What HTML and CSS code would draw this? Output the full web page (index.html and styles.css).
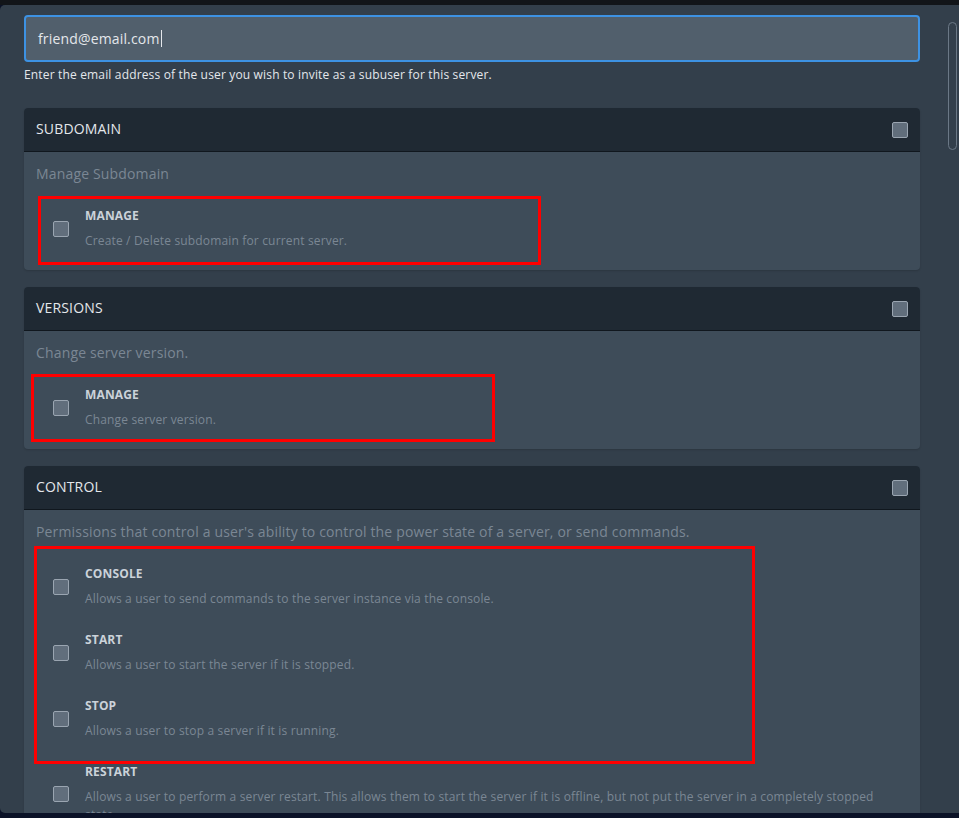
FILE: index.html
```html
<!DOCTYPE html>
<html>
<head>
<meta charset="utf-8">
<link rel="stylesheet" href="styles.css">
</head>
<body>
<div class="topbar"></div>
<div class="modal">
  <div class="scrollbar"></div>
  <div class="content">
    <div class="field">
      <div class="input"><span class="value">friend@email.com</span><span class="caret"></span></div>
      <p class="help">Enter the email address of the user you wish to invite as a subuser for this server.</p>
    </div>

    <section class="card">
      <header class="card-head"><h3>SUBDOMAIN</h3><span class="box"></span></header>
      <div class="card-body">
        <p class="card-desc">Manage Subdomain</p>
        <div class="row">
          <span class="box"></span>
          <div class="row-text"><div class="row-title">MANAGE</div><div class="row-desc">Create / Delete subdomain for current server.</div></div>
        </div>
      </div>
    </section>

    <section class="card">
      <header class="card-head"><h3>VERSIONS</h3><span class="box"></span></header>
      <div class="card-body">
        <p class="card-desc">Change server version.</p>
        <div class="row">
          <span class="box"></span>
          <div class="row-text"><div class="row-title">MANAGE</div><div class="row-desc">Change server version.</div></div>
        </div>
      </div>
    </section>

    <section class="card">
      <header class="card-head"><h3>CONTROL</h3><span class="box"></span></header>
      <div class="card-body">
        <p class="card-desc">Permissions that control a user's ability to control the power state of a server, or send commands.</p>
        <div class="row">
          <span class="box"></span>
          <div class="row-text"><div class="row-title">CONSOLE</div><div class="row-desc">Allows a user to send commands to the server instance via the console.</div></div>
        </div>
        <div class="row">
          <span class="box"></span>
          <div class="row-text"><div class="row-title">START</div><div class="row-desc">Allows a user to start the server if it is stopped.</div></div>
        </div>
        <div class="row">
          <span class="box"></span>
          <div class="row-text"><div class="row-title">STOP</div><div class="row-desc">Allows a user to stop a server if it is running.</div></div>
        </div>
        <div class="row">
          <span class="box"></span>
          <div class="row-text"><div class="row-title">RESTART</div><div class="row-desc">Allows a user to perform a server restart. This allows them to start the server if it is offline, but not put the server in a completely stopped state.</div></div>
        </div>
      </div>
    </section>
  </div>
  <div class="mark mark-1"></div>
  <div class="mark mark-2"></div>
  <div class="mark mark-3"></div>
</div>
</body>
</html>
```

FILE: styles.css
```css
* { box-sizing: border-box; }
html, body { margin: 0; padding: 0; }
body {
  background: #0b1227;
  font-family: "Open Sans", "Noto Sans", sans-serif;
  letter-spacing: 0.01em;
  color: #e4e7eb;
  height: 818px;
  overflow: hidden;
}
.topbar { height: 5px; background: #121519; }
.modal {
  position: relative;
  height: 808px;
  background: #333f4b;
  border-radius: 5px 0 0 5px;
  overflow: hidden;
}
.content { padding: 10px 39px 0 24px; }
.scrollbar {
  position: absolute;
  left: 948px;
  top: 17px;
  width: 9px;
  height: 128px;
  border: 1px solid #6b7886;
  border-radius: 5px;
}
.input {
  height: 47px;
  background: #515f6c;
  border: 2px solid #3d92e3;
  border-radius: 4px;
  display: flex;
  align-items: center;
  padding-left: 12px;
  font-size: 14px;
  color: #e4e7eb;
}
.caret { width: 1px; height: 17px; background: #e4e7eb; margin-left: 1px; }
.help {
  margin: 5px 0 0;
  font-size: 12px;
  line-height: 16px;
  color: #e4e7eb;
}
.card {
  margin-top: 17px;
  border-radius: 4px;
  overflow: hidden;
  background: #3e4c59;
  box-shadow: 0 1px 2px rgba(0,0,0,0.15);
}
.field + .card { margin-top: 25px; }
.card-head {
  height: 44px;
  background: #1f2933;
  border-bottom: 1px solid #10171e;
  display: flex;
  align-items: center;
  justify-content: space-between;
  padding: 0 12px 2px;
}
.card-head .box { margin-top: 2px; }
.card-head h3 { margin: 0; font-size: 14px; font-weight: 400; color: #e4e7eb; }
.box {
  flex: none;
  width: 16px;
  height: 16px;
  background: #616e7c;
  border: 1px solid #9aa5b1;
  border-radius: 2px;
}
.card-body { padding: 12px 12px 8px; }
.card-desc { margin: 0 0 12px; font-size: 14px; line-height: 20px; color: #7b8794; }
.row {
  display: flex;
  align-items: center;
  gap: 16px;
  padding: 12px 17px;
  min-height: 66px;
}
.row-title { font-size: 12px; line-height: 16px; font-weight: 700; color: #cbd2d9; }
.row-desc { margin-top: 8px; font-size: 12px; line-height: 18px; color: #7b8794; }
.mark {
  position: absolute;
  border: 3px solid #ff0000;
}
.mark-1 { left: 38px; top: 191px; width: 503px; height: 69px; }
.mark-2 { left: 31px; top: 369px; width: 464px; height: 68px; }
.mark-3 { left: 34px; top: 541px; width: 721px; height: 218px; }
```
